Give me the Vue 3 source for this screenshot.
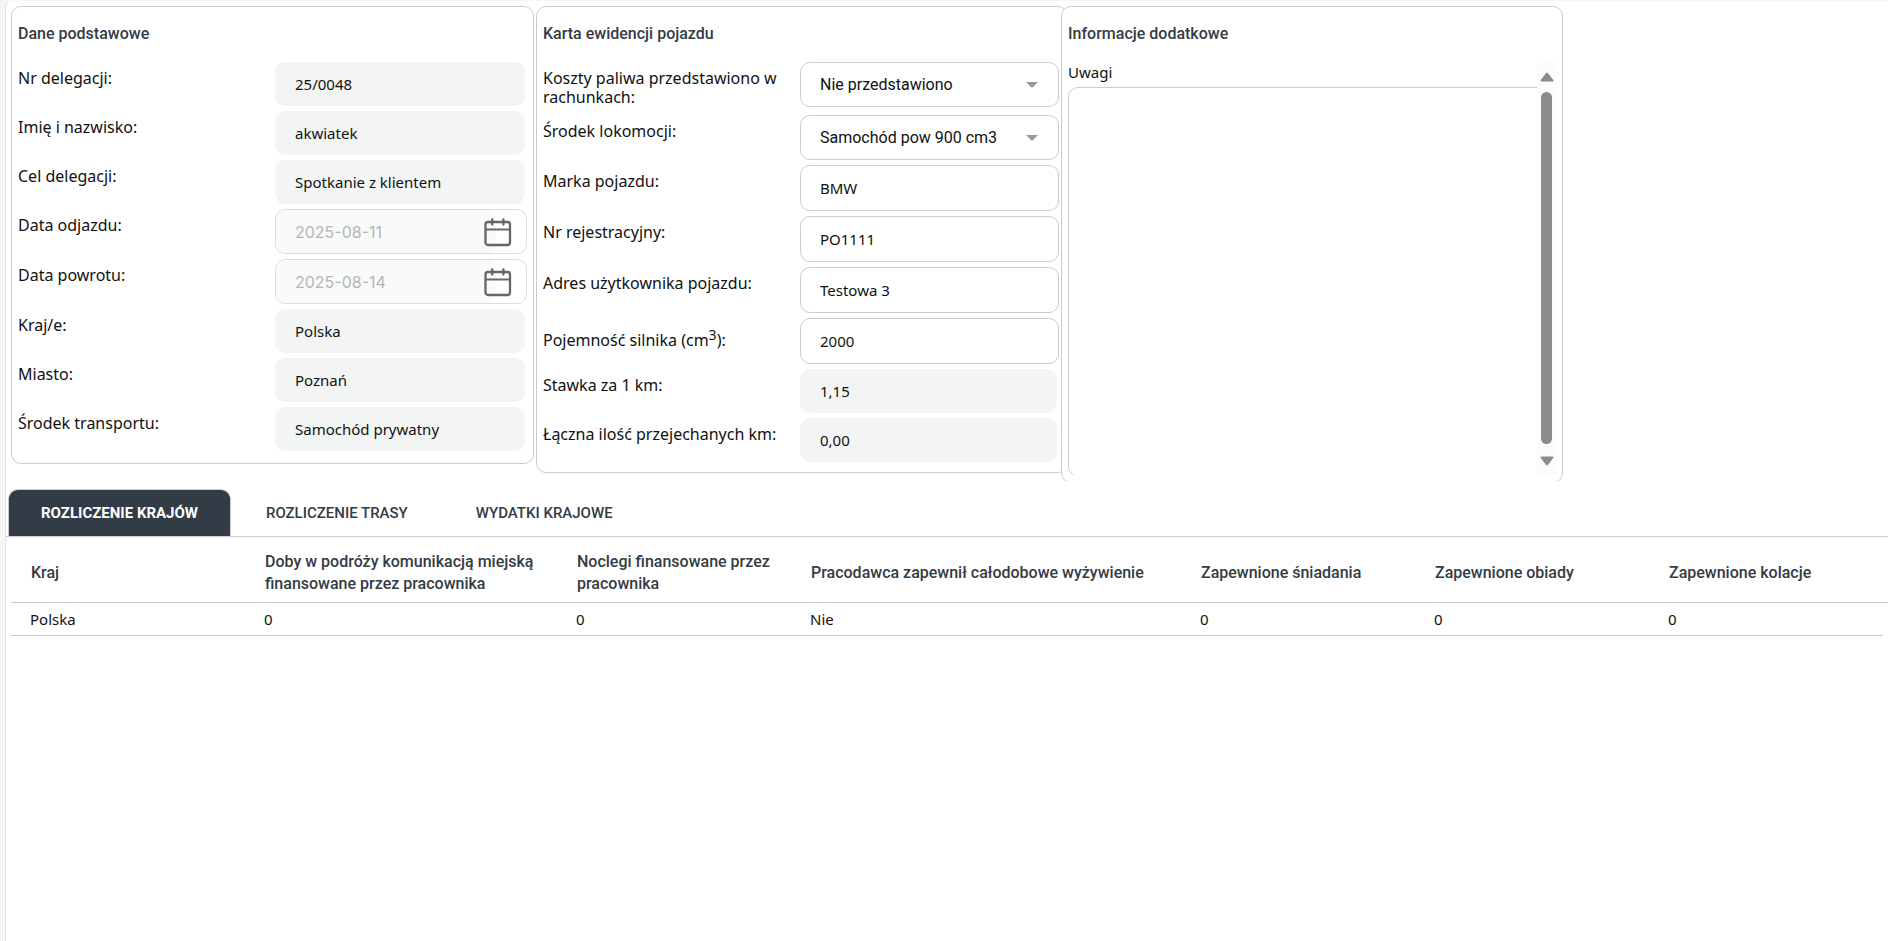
<script setup>
import { ref, reactive } from 'vue'

const basics = reactive([
  { id: 'nr', label: 'Nr delegacji:', value: '25/0048' },
  { id: 'name', label: 'Imię i nazwisko:', value: 'akwiatek' },
  { id: 'goal', label: 'Cel delegacji:', value: 'Spotkanie z klientem' },
  { id: 'from', label: 'Data odjazdu:', value: '2025-08-11', date: true },
  { id: 'to', label: 'Data powrotu:', value: '2025-08-14', date: true },
  { id: 'country', label: 'Kraj/e:', value: 'Polska' },
  { id: 'city', label: 'Miasto:', value: 'Poznań' },
  { id: 'transport', label: 'Środek transportu:', value: 'Samochód prywatny' },
])

const vehicle = reactive([
  { id: 'brand', label: 'Marka pojazdu:', value: 'BMW' },
  { id: 'plate', label: 'Nr rejestracyjny:', value: 'PO1111' },
  { id: 'address', label: 'Adres użytkownika pojazdu:', value: 'Testowa 3' },
  { id: 'engine', label: 'Pojemność silnika (cm', sup: '3', tail: '):', value: '2000' },
  { id: 'rate', label: 'Stawka za 1 km:', value: '1,15', locked: true },
  { id: 'km', label: 'Łączna ilość przejechanych km:', value: '0,00', locked: true },
])

const fuel = ref('Nie przedstawiono')
const mode = ref('Samochód pow 900 cm3')
const notes = ref('')

const tabs = ['ROZLICZENIE KRAJÓW', 'ROZLICZENIE TRASY', 'WYDATKI KRAJOWE']
const active = ref(0)

const columns = [
  { title: 'Kraj', span: 3 },
  { title: 'Doby w podróży komunikacją miejską finansowane przez pracownika', span: 4 },
  { title: 'Noclegi finansowane przez pracownika', span: 3 },
  { title: 'Pracodawca zapewnił całodobowe wyżywienie', span: 5 },
  { title: 'Zapewnione śniadania', span: 3 },
  { title: 'Zapewnione obiady', span: 3 },
  { title: 'Zapewnione kolacje', span: 3 },
]
const rows = [['Polska', '0', '0', 'Nie', '0', '0', '0']]
</script>

<template>
  <main class="page">
    <div class="panels">
      <section class="panel basics">
        <h2>Dane podstawowe</h2>
        <div v-for="f in basics" :key="f.id" class="row">
          <label :for="f.id">{{ f.label }}</label>
          <div v-if="f.date" class="date">
            <input :id="f.id" v-model="f.value" type="text" disabled />
            <button type="button" aria-label="Kalendarz">
              <svg width="28" height="30" viewBox="0 0 28 30" fill="none" stroke="#666" stroke-width="2.3">
                <rect x="1.500" y="5" width="24.500" height="23" rx="2.500" />
                <path d="M1.500 12.500H26" stroke-width="2" />
                <path d="M8.200 2.300V7.500M19.400 2.300V7.500" stroke-linecap="round" />
              </svg>
            </button>
          </div>
          <input v-else :id="f.id" v-model="f.value" class="locked" type="text" readonly />
        </div>
      </section>

      <section class="panel vehicle">
        <h2>Karta ewidencji pojazdu</h2>
        <div class="row wide">
          <label for="fuel">Koszty paliwa przedstawiono w rachunkach:</label>
          <div class="select">
            <select id="fuel" v-model="fuel"><option>Nie przedstawiono</option><option>Przedstawiono</option></select>
            <svg width="12" height="6" viewBox="0 0 12 6"><path d="M0 0H12L6 6Z" fill="#999" /></svg>
          </div>
        </div>
        <div class="row">
          <label for="mode">Środek lokomocji:</label>
          <div class="select">
            <select id="mode" v-model="mode"><option>Samochód pow 900 cm3</option><option>Motocykl</option></select>
            <svg width="12" height="6" viewBox="0 0 12 6"><path d="M0 0H12L6 6Z" fill="#999" /></svg>
          </div>
        </div>
        <div v-for="f in vehicle" :key="f.id" class="row">
          <label :for="f.id">{{ f.label }}<sup v-if="f.sup">{{ f.sup }}</sup>{{ f.tail }}</label>
          <input :id="f.id" v-model="f.value" :class="f.locked ? 'locked' : 'open'" type="text" :readonly="f.locked" />
        </div>
      </section>

      <section class="panel extra">
        <h2>Informacje dodatkowe</h2>
        <div class="scroller">
          <div class="notes">
            <label for="notes">Uwagi</label>
            <textarea id="notes" v-model="notes"></textarea>
          </div>
          <div class="bar" aria-hidden="true">
            <svg width="14" height="10" viewBox="0 0 14 10"><path d="M7 1.500L12.500 8.500H1.500Z" fill="#8b8b8b" stroke="#8b8b8b" stroke-width="2" stroke-linejoin="round" /></svg>
            <div class="thumb"></div>
            <svg width="14" height="10" viewBox="0 0 14 10"><path d="M7 8.500L12.500 1.500H1.500Z" fill="#8b8b8b" stroke="#8b8b8b" stroke-width="2" stroke-linejoin="round" /></svg>
          </div>
        </div>
      </section>
    </div>

    <nav class="tabs" role="tablist">
      <button
        v-for="(t, i) in tabs"
        :key="t"
        type="button"
        role="tab"
        :aria-selected="active === i"
        :class="{ active: active === i }"
        @click="active = i"
      >{{ t }}</button>
    </nav>

    <div class="grid">
      <table>
        <colgroup>
          <col v-for="c in columns" :key="c.title" :style="{ width: (c.span / 24) * 100 + '%' }" />
        </colgroup>
        <thead>
          <tr><th v-for="c in columns" :key="c.title" scope="col">{{ c.title }}</th></tr>
        </thead>
        <tbody>
          <tr v-for="r in rows" :key="r[0]"><td v-for="(v, i) in r" :key="i">{{ v }}</td></tr>
        </tbody>
      </table>
    </div>
  </main>
</template>

<style>
body {
  background: #f6f6f6;
}
</style>

<style scoped>
* {
  box-sizing: border-box;
}
.page {
  min-height: 100vh;
  margin-left: 5px;
  padding-top: 5px;
  background: #fff;
  border-left: 1px solid #e4e4e4;
  border-top: 1px solid #f6f6f6;
  border-top-left-radius: 8px;
  font-family: "Noto Sans", "Open Sans", sans-serif;
  font-size: 15px;
  color: #111;
}
.panels {
  display: flex;
  align-items: flex-start;
  height: 475px;
  padding-left: 5px;
  overflow: hidden;
}
.panel {
  flex: none;
  padding: 0 6px;
  background: #fff;
  border: 1px solid #ccc;
  border-radius: 10px;
}
.basics {
  width: 523px;
  margin-right: 2px;
  padding-bottom: 7px;
}
.vehicle {
  width: 532px;
  padding-bottom: 5px;
}
.extra {
  width: 502px;
  height: 477px;
  margin-left: -7px;
}
h2 {
  margin: 0;
  padding: 16px 0 17px;
  font: 500 16px/22px Roboto, sans-serif;
  color: #333b45;
}
.row {
  display: grid;
  grid-template-columns: 257px 1fr;
  align-items: start;
  margin-bottom: 5px;
}
.row.wide {
  margin-bottom: 8px;
}
label {
  padding-top: 7px;
  font-size: 16px;
  line-height: 19px;
}
sup {
  font-size: 14px;
}
input,
select,
textarea {
  display: block;
  width: 100%;
  margin: 0;
  padding: 0 19px;
  border: 1px solid #ccc;
  border-radius: 10px;
  background: #fff;
  font: inherit;
  color: #111;
  outline: none;
}
.locked {
  width: 250px;
  height: 44px;
  padding: 0 20px;
  border: 0;
  background: #f3f5f5;
}
.date {
  display: flex;
  width: 252px;
  height: 45px;
  border: 1px solid #ddd;
  border-radius: 10px;
}
.date input {
  flex: 1;
  min-width: 0;
  height: 100%;
  border: 0;
  background: #f9fafa;
  font-family: Inter, sans-serif;
  font-size: 16px;
  color: #b5b5b5;
}
.date button {
  flex: none;
  display: grid;
  place-items: center;
  width: 28px;
  margin: 0 14px 0 -12px;
  padding: 0;
  border: 0;
  background: none;
}
.vehicle .row {
  width: 516px;
}
.vehicle .locked {
  width: 257px;
}
.open {
  height: 46px;
}
.select {
  position: relative;
}
select {
  height: 45px;
  appearance: none;
  font-family: Roboto, sans-serif;
  font-size: 16px;
}
.select svg {
  position: absolute;
  right: 21px;
  top: 20px;
  pointer-events: none;
}
.scroller {
  display: flex;
  height: 413px;
}
.notes {
  flex: 1;
  overflow: hidden;
}
.notes label {
  display: block;
  padding: 1px 0 0;
  margin-bottom: 5px;
  font-size: 15px;
}
textarea {
  width: 486px;
  height: 390px;
  resize: none;
}
.bar {
  display: flex;
  flex-direction: column;
  align-items: center;
  gap: 10px;
  width: 19px;
  padding: 10px 0 9px;
  background: #fcfcfc;
}
.thumb {
  flex: 1;
  width: 11px;
  margin-bottom: 2px;
  border-radius: 6px;
  background: #8b8b8b;
}
.tabs {
  display: flex;
  gap: 2px;
  height: 56px;
  padding: 8px 0 0 2px;
  border-bottom: 1px solid #ccc;
}
.tabs button {
  padding: 0 33px;
  border: 0;
  background: none;
  font: 500 15px Roboto, sans-serif;
  color: #333b45;
}
.tabs .active {
  padding: 0 32px;
  border: 1px solid #ccc;
  border-bottom: 0;
  border-radius: 10px 10px 0 0;
  background: #323c47;
  color: #fff;
  font-weight: 700;
}
.grid {
  padding: 0 5px;
}
table {
  width: 100%;
  table-layout: fixed;
  border-collapse: collapse;
}
th,
td {
  padding: 0 19px;
  border-bottom: 1px solid #c0cedb;
  text-align: left;
}
th {
  position: relative;
  height: 65px;
  padding: 8px 10px 0 20px;
  font: 500 16px/22px Roboto, sans-serif;
  color: #333b45;
}
th:last-child::after {
  content: "";
  position: absolute;
  right: -5px;
  bottom: -1px;
  width: 5px;
  height: 1px;
  background: #c0cedb;
}
td {
  height: 33px;
}
</style>
